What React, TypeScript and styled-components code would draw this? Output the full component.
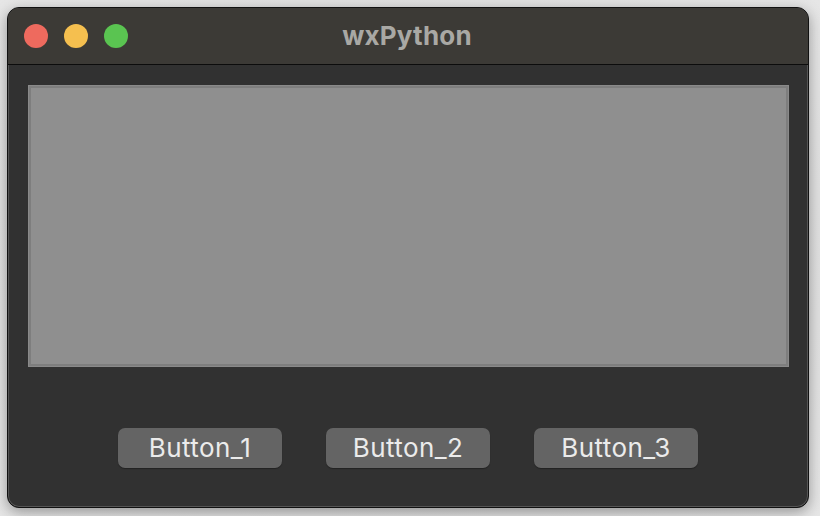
import styled, { createGlobalStyle } from "styled-components";

const GlobalStyle = createGlobalStyle`
  html, body {
    margin: 0;
    padding: 0;
    background: #e4e4e4;
    font-family: Inter, "Liberation Sans", sans-serif;
  }
`;

const Desktop = styled.div`
  width: 820px;
  height: 516px;
  box-sizing: border-box;
  padding: 7px 11px 8px 7px;
  background: radial-gradient(ellipse at center, #d4d4d4 0%, #e6e6e6 100%);
`;

const Window = styled.div`
  width: 802px;
  height: 501px;
  box-sizing: border-box;
  border: 1px solid #111111;
  border-radius: 12px;
  overflow: hidden;
  display: flex;
  flex-direction: column;
  background: #313131;
  box-shadow: 0 4px 14px rgba(0, 0, 0, 0.35), inset 0 0 0 1px #555555;
`;

const TitleBar = styled.div`
  height: 56px;
  flex-shrink: 0;
  position: relative;
  display: flex;
  align-items: center;
  justify-content: center;
  background: #3c3a36;
  border-bottom: 1px solid #0c0c0c;
`;

const Lights = styled.div`
  position: absolute;
  left: 16px;
  top: 16px;
  display: flex;
  gap: 16px;
`;

const Light = styled.span<{ color: string }>`
  width: 24px;
  height: 24px;
  border-radius: 50%;
  background: ${(p) => p.color};
`;

const Title = styled.div`
  font-family: Inter, "Liberation Sans", sans-serif;
  font-weight: 700;
  font-size: 26px;
  letter-spacing: 0.2px;
  color: #a9a8a4;
  margin-left: -2px;
  margin-top: -2px;
`;

const Content = styled.div`
  flex: 1;
  display: flex;
  flex-direction: column;
  padding: 21px 20px 0 21px;
`;

const Panel = styled.div`
  height: 280px;
  box-sizing: border-box;
  background: #8f8f8f;
  border: 2px solid #7e7e7e;
  box-shadow: 0 0 0 1px #8a8a8a;
`;

const ButtonRow = styled.div`
  display: flex;
  justify-content: center;
  gap: 44px;
  margin-top: 62px;
  margin-left: -1px;
`;

const Button = styled.button`
  width: 164px;
  height: 40px;
  border: none;
  border-radius: 7px;
  background: #646464;
  color: #ebebeb;
  font-family: Inter, "Liberation Sans", sans-serif;
  font-size: 26px;
  letter-spacing: 0.4px;
  padding: 0;
  padding-bottom: 2px;
  box-shadow: 0 1px 1px rgba(0, 0, 0, 0.3);
`;

export default function App() {
  return (
    <>
      <GlobalStyle />
      <Desktop>
        <Window>
          <TitleBar>
            <Lights>
              <Light color="#ee6a5e" />
              <Light color="#f5bf4f" />
              <Light color="#5ac451" />
            </Lights>
            <Title>wxPython</Title>
          </TitleBar>
          <Content>
            <Panel />
            <ButtonRow>
              <Button>Button_1</Button>
              <Button>Button_2</Button>
              <Button>Button_3</Button>
            </ButtonRow>
          </Content>
        </Window>
      </Desktop>
    </>
  );
}
